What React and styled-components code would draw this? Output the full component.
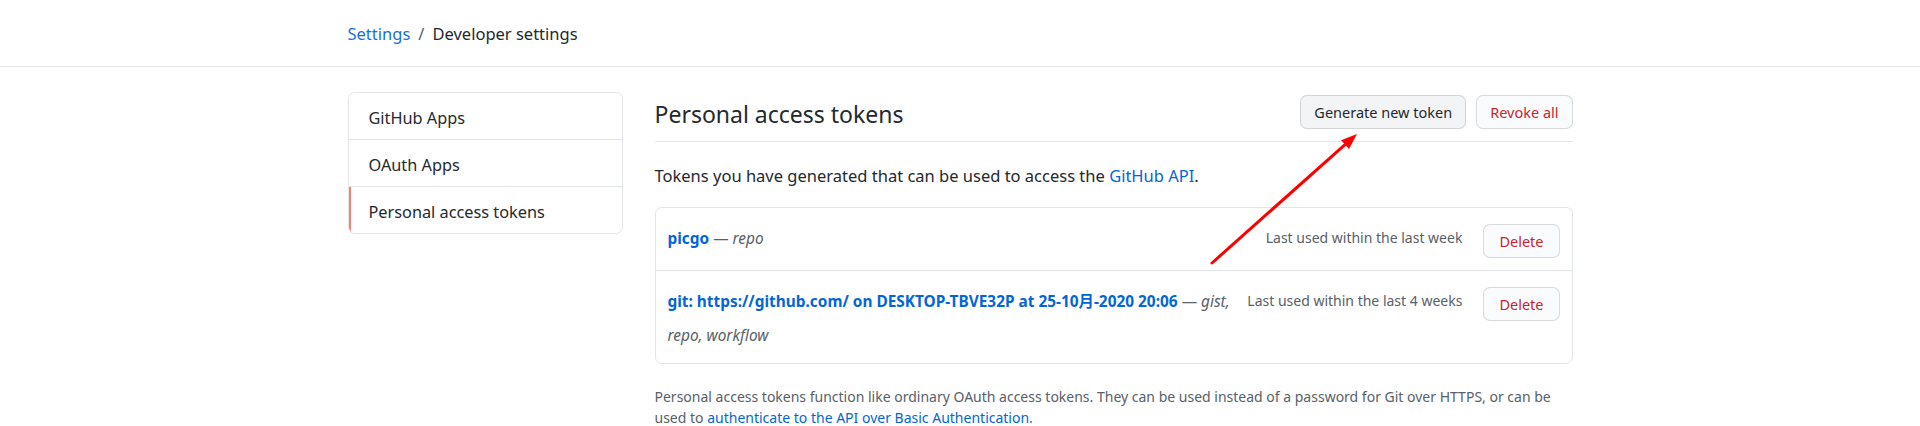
import React from 'react';
import styled, { createGlobalStyle } from 'styled-components';

const textColor = '#24292e';
const mutedText = '#586069';
const linkColor = '#0366d6';
const dangerColor = '#cb2431';
const borderColor = '#e1e4e8';

const GlobalStyle = createGlobalStyle`
	body {
		margin: 0;
		background: #fff;
		color: ${textColor};
		font-family: "Noto Sans", "Noto Sans CJK SC", sans-serif;
	}
`;

const tokens = [
	{
		id: 1,
		name: 'picgo',
		scopes: 'repo',
		lastUsed: 'Last used within the last week',
	},
	{
		id: 2,
		name: 'git: https://github.com/ on DESKTOP-TBVE32P at 25-10月-2020 20:06',
		scopes: 'gist, repo, workflow',
		lastUsed: 'Last used within the last 4 weeks',
	},
];

const menu = ['GitHub Apps', 'OAuth Apps', 'Personal access tokens'];

const App = () => (
	<Page>
		<GlobalStyle />
		<Header>
			<Breadcrumb>
				<Crumb href="#">Settings</Crumb>
				<Slash>/</Slash>
				<span>Developer settings</span>
			</Breadcrumb>
		</Header>
		<Container>
			<Sidebar>
				{menu.map((item, i) => (
					<MenuItem key={item} selected={i === menu.length - 1}>
						{item}
					</MenuItem>
				))}
			</Sidebar>
			<Main>
				<Subhead>
					<Title>Personal access tokens</Title>
					<Button>Generate new token</Button>
					<Button danger>Revoke all</Button>
				</Subhead>
				<Lead>
					Tokens you have generated that can be used to access the{' '}
					<Link href="#">GitHub API</Link>.
				</Lead>
				<TokenList>
					{tokens.map((token) => (
						<TokenRow key={token.id}>
							<TokenInfo>
								<TokenName href="#">{token.name}</TokenName>
								<Scopes>
									{' '}— <em>{token.scopes}</em>
								</Scopes>
							</TokenInfo>
							<LastUsed>{token.lastUsed}</LastUsed>
							<Button danger small>
								Delete
							</Button>
						</TokenRow>
					))}
				</TokenList>
				<Note>
					Personal access tokens function like ordinary OAuth access tokens. They can be used
					instead of a password for Git over HTTPS, or can be used to{' '}
					<Link href="#">authenticate to the API over Basic Authentication</Link>.
				</Note>
			</Main>
		</Container>
		<Arrow width="170" height="150" viewBox="0 0 170 150">
			<line x1="12" y1="138" x2="145" y2="19.6" stroke="#ff0000" strokeWidth="3" strokeLinecap="round" />
			<polygon points="157,9 149,24.1 141.1,15.2" fill="#ff0000" />
		</Arrow>
	</Page>
);

const Page = styled.div`
	position: relative;
	min-height: 426px;
`;
const Header = styled.div`
	border-bottom: 1px solid ${borderColor};
`;
const Breadcrumb = styled.div`
	max-width: 1225px;
	margin: 0 auto;
	padding: 0 20px;
	height: 66px;
	display: flex;
	align-items: center;
	font-size: 16.5px;
	color: ${textColor};
`;
const Crumb = styled.a`
	color: #1a6fdf;
	text-decoration: none;
`;
const Slash = styled.span`
	color: ${mutedText};
	margin: 0 8px;
`;
const Container = styled.div`
	max-width: 1225px;
	margin: 0 auto;
	padding: 25px 20px 0;
	display: flex;
	gap: 32px;
`;
const Sidebar = styled.nav`
	flex: none;
	width: 273px;
	align-self: flex-start;
	border: 1px solid ${borderColor};
	border-radius: 7px;
	overflow: hidden;
`;
const MenuItem = styled.div`
	height: 46px;
	box-sizing: border-box;
	padding: 3px 0 0 20px;
	display: flex;
	align-items: center;
	font-size: 16.3px;
	color: ${textColor};
	box-shadow: ${(p) => (p.selected ? 'inset 2px 0 0 #f9826c' : 'none')};
	& + & {
		border-top: 1px solid ${borderColor};
		height: 47px;
	}
`;
const Main = styled.div`
	flex: 1;
	min-width: 0;
`;
const Subhead = styled.div`
	display: flex;
	align-items: center;
	gap: 10px;
	padding: 2px 0 11px;
	border-bottom: 1px solid ${borderColor};
`;
const Title = styled.h2`
	flex: 1;
	margin: 4px 0 0;
	font-size: 23px;
	font-weight: 400;
	color: ${textColor};
`;
const Button = styled.button`
	flex: none;
	height: 34px;
	margin: ${(p) => (p.small ? '2px 0' : '0')};
	padding: 0 ${(p) => (p.small ? 15 : 13)}px;
	border: 1px solid rgba(27, 31, 35, 0.15);
	border-radius: 7px;
	background: ${(p) => (p.danger ? '#fafbfc' : '#f3f4f6')};
	color: ${(p) => (p.danger ? dangerColor : textColor)};
	font-family: inherit;
	font-size: 14.5px;
	cursor: pointer;
`;
const Lead = styled.p`
	margin: 21px 0 19px;
	font-size: 16.5px;
	line-height: 25px;
	color: ${textColor};
`;
const Link = styled.a`
	color: ${linkColor};
	text-decoration: none;
`;
const TokenList = styled.div`
	border: 1px solid ${borderColor};
	border-radius: 7px;
`;
const TokenRow = styled.div`
	display: flex;
	align-items: flex-start;
	padding: 14px 12px 10px 12px;
	& + & {
		border-top: 1px solid ${borderColor};
	}
`;
const TokenInfo = styled.div`
	flex: 1;
	min-width: 0;
	line-height: 34px;
	font-size: 15.4px;
`;
const TokenName = styled.a`
	color: ${linkColor};
	font-weight: 700;
	text-decoration: none;
`;
const Scopes = styled.span`
	color: ${mutedText};
	em {
		font-style: italic;
	}
`;
const LastUsed = styled.div`
	flex: none;
	margin: 0 21px 0 17px;
	line-height: 32px;
	font-size: 14px;
	color: ${mutedText};
`;
const Note = styled.p`
	margin: 22px 0 0;
	font-size: 14px;
	line-height: 21px;
	color: ${mutedText};
`;
const Arrow = styled.svg`
	position: absolute;
	left: 1200px;
	top: 125px;
	pointer-events: none;
`;

export default App;
